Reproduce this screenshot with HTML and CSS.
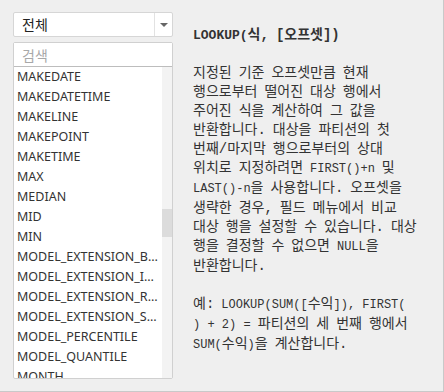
FILE: index.html
```html
<!DOCTYPE html>
<html lang="ko">
<head>
  <meta charset="UTF-8" />
  <title>함수</title>
  <link rel="stylesheet" href="styles.css">
</head>
<body>
  <div class="functions">
    <div class="picker">
      <div class="select">
        <span class="select-value">전체</span>
        <span class="select-arrow"></span>
      </div>
      <div class="finder">
        <input class="search" type="text" placeholder="검색" />
        <div class="list-wrap">
          <ul class="list">
            <li>MAKEDATE</li>
            <li>MAKEDATETIME</li>
            <li>MAKELINE</li>
            <li>MAKEPOINT</li>
            <li>MAKETIME</li>
            <li>MAX</li>
            <li>MEDIAN</li>
            <li>MID</li>
            <li>MIN</li>
            <li>MODEL_EXTENSION_BOOL</li>
            <li>MODEL_EXTENSION_INT</li>
            <li>MODEL_EXTENSION_REAL</li>
            <li>MODEL_EXTENSION_STR</li>
            <li>MODEL_PERCENTILE</li>
            <li>MODEL_QUANTILE</li>
            <li>MONTH</li>
          </ul>
          <div class="scrollbar"><div class="thumb"></div></div>
        </div>
      </div>
    </div>

    <div class="help">
      <p class="syntax"><code>LOOKUP(</code>식, [오프셋])</p>
      <p>지정된 기준 오프셋만큼 현재<br>행으로부터 떨어진 대상 행에서<br>주어진 식을 계산하여 그 값을<br>반환합니다. 대상을 파티션의 첫<br>번째/마지막 행으로부터의 상대<br>위치로 지정하려면 <code>FIRST()+n</code> 및<br><code>LAST()-n</code>을 사용합니다. 오프셋을<br>생략한 경우, 필드 메뉴에서 비교<br>대상 행을 설정할 수 있습니다. 대상<br>행을 결정할 수 없으면 <code>NULL</code>을<br>반환합니다.</p>
      <p>예: <code>LOOKUP(SUM([</code>수익<code>]), FIRST(</code><br><code>) + 2) = </code>파티션의 세 번째 행에서<br><code>SUM(</code>수익<code>)</code>을 계산합니다.</p>
    </div>
  </div>
</body>
</html>
```

FILE: styles.css
```css
* {
  box-sizing: border-box;
  margin: 0;
  padding: 0;
}

body {
  width: 444px;
  height: 392px;
  background-color: #efefef;
  border-right: 1px solid #c9c9c9;
  border-bottom: 1px solid #c9c9c9;
  color: #333;
  font-family: 'Noto Sans', 'Noto Sans CJK KR', sans-serif;
  overflow: hidden;
}

.functions {
  display: flex;
  gap: 20px;
  padding: 12px 0 0 13px;
}

.picker {
  width: 160px;
  flex-shrink: 0;
  display: flex;
  flex-direction: column;
  gap: 5px;
}

.select {
  height: 25px;
  display: flex;
  background-color: #fff;
  border: 1px solid #d6d6d6;
  border-radius: 2px;
}

.select-value {
  flex: 1;
  padding-left: 8px;
  font-family: 'Noto Sans CJK KR', sans-serif;
  font-size: 14px;
  line-height: 22px;
  color: #222;
}

.select-arrow {
  width: 18px;
  border-left: 1px solid #e2e2e2;
  display: flex;
  align-items: center;
  justify-content: center;
}

.select-arrow::after {
  content: "";
  border-left: 4px solid transparent;
  border-right: 4px solid transparent;
  border-top: 4px solid #666;
}

.finder {
  height: 337px;
  display: flex;
  flex-direction: column;
  background-color: #fff;
  border: 1px solid #d0d0d0;
  border-radius: 2px;
}

.search {
  height: 24px;
  border: none;
  border-bottom: 1px solid #bdbdbd;
  padding-left: 8px;
  font-family: 'Noto Sans CJK KR', sans-serif;
  font-size: 14px;
  outline: none;
}

.search::placeholder {
  color: #a8a8a8;
}

.list-wrap {
  flex: 1;
  display: flex;
  overflow: hidden;
}

.list {
  flex: 1;
  min-width: 0;
  list-style: none;
  overflow: hidden;
}

.list li {
  height: 20px;
  padding: 0 2px 0 3px;
  font-size: 12.5px;
  line-height: 20px;
  color: #333;
  white-space: nowrap;
  overflow: hidden;
  text-overflow: ellipsis;
}

.scrollbar {
  width: 10px;
  background-color: #f3f3f3;
  padding-top: 142px;
}

.thumb {
  height: 28px;
  background-color: #dcdcdc;
}

.help {
  padding-top: 14px;
  font-family: 'Liberation Mono', 'Noto Sans CJK KR', monospace;
  font-size: 14px;
  word-spacing: -1.4px;
  line-height: 19px;
  color: #333;
}

.help p {
  margin-bottom: 19px;
  white-space: nowrap;
}

.help code {
  font-family: 'Liberation Mono', monospace;
  font-size: 12px;
  word-spacing: 0;
}

.help .syntax {
  font-weight: bold;
}

.help .syntax code {
  font-size: 13px;
}
```
